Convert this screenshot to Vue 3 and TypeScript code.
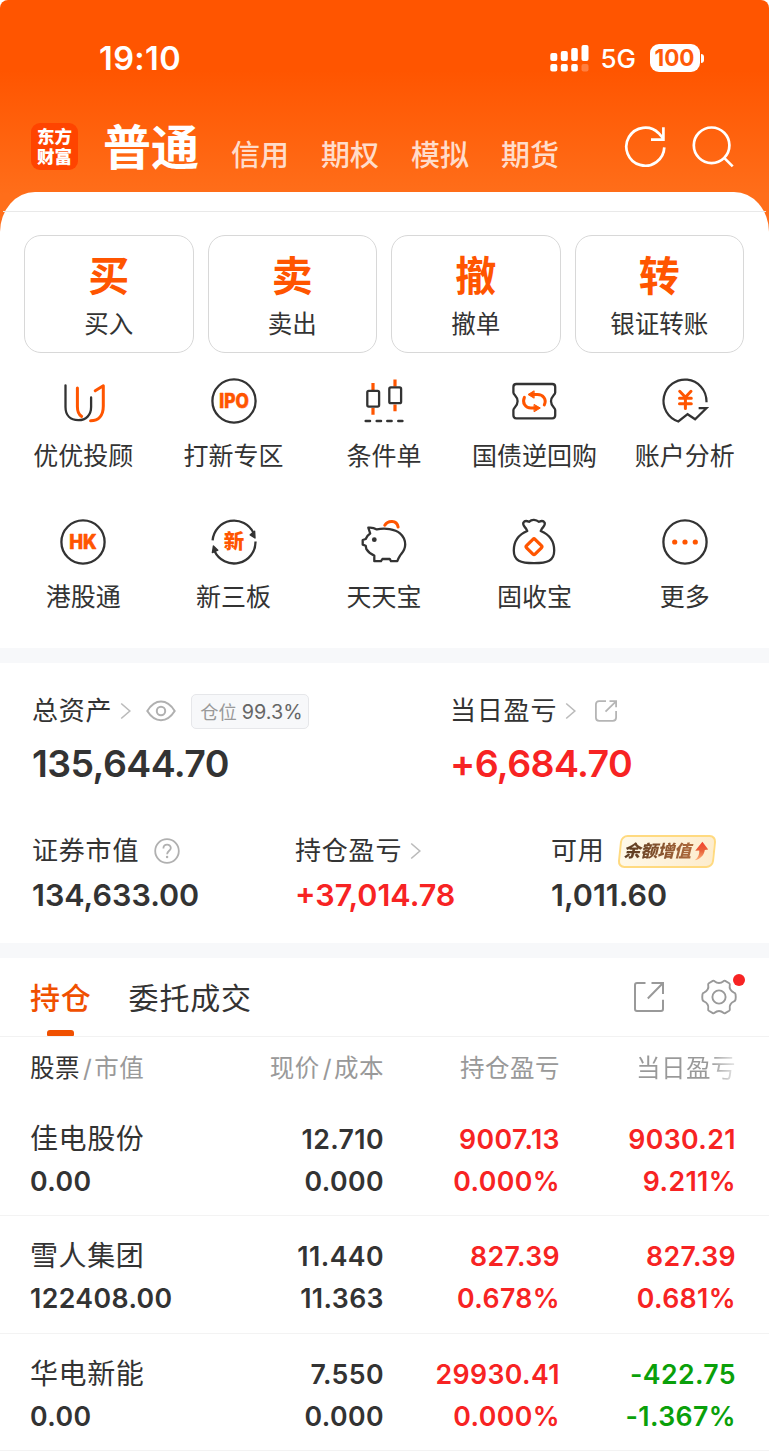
<script setup lang="ts">
interface Tone { text: string; tone: 'dark' | 'up' | 'down' }
interface Holding { name: string; value: string; price: string; cost: string; profit: Tone; profitRate: Tone; day: Tone; dayRate: Tone }

const up = (text: string): Tone => ({ text, tone: 'up' })
const down = (text: string): Tone => ({ text, tone: 'down' })

const modes = ['信用', '期权', '模拟', '期货']

const actions = [
  { glyph: '买', label: '买入' },
  { glyph: '卖', label: '卖出' },
  { glyph: '撤', label: '撤单' },
  { glyph: '转', label: '银证转账' },
]

const services = [
  { icon: 'advisor', label: '优优投顾' },
  { icon: 'ipo', label: '打新专区' },
  { icon: 'candles', label: '条件单' },
  { icon: 'ticket', label: '国债逆回购' },
  { icon: 'analysis', label: '账户分析' },
  { icon: 'hk', label: '港股通' },
  { icon: 'board', label: '新三板' },
  { icon: 'pig', label: '天天宝' },
  { icon: 'bag', label: '固收宝' },
  { icon: 'more', label: '更多' },
]

const holdings: Holding[] = [
  { name: '佳电股份', value: '0.00', price: '12.710', cost: '0.000', profit: up('9007.13'), profitRate: up('0.000%'), day: up('9030.21'), dayRate: up('9.211%') },
  { name: '雪人集团', value: '122408.00', price: '11.440', cost: '11.363', profit: up('827.39'), profitRate: up('0.678%'), day: up('827.39'), dayRate: up('0.681%') },
  { name: '华电新能', value: '0.00', price: '7.550', cost: '0.000', profit: up('29930.41'), profitRate: up('0.000%'), day: down('-422.75'), dayRate: down('-1.367%') },
]
</script>

<template>
  <div class="page">
    <header class="header">
      <div class="status">
        <span class="clock">19:10</span>
        <div class="status-right">
          <svg class="signal" width="39" height="29" viewBox="0 0 39 29" fill="#fff">
            <rect x="0.3" y="9" width="7" height="8" rx="2" />
            <rect x="10.8" y="7" width="7" height="10" rx="2" />
            <rect x="21.2" y="4" width="6.6" height="13" rx="2" />
            <rect x="31.5" y="1" width="7" height="16" rx="2" />
            <rect x="0.3" y="20" width="7" height="7.6" rx="2" />
            <rect x="10.8" y="20" width="7" height="7.6" rx="2" />
            <rect x="21.2" y="20" width="6.6" height="7.6" rx="2" />
            <rect x="31.5" y="20" width="7" height="7.6" rx="2" opacity="0.25" />
          </svg>
          <span class="network">5G</span>
          <span class="battery">100</span>
          <span class="battery-tip"></span>
        </div>
      </div>
      <div class="nav">
        <div class="logo"><span>东方</span><span>财富</span></div>
        <span class="mode-active">普通</span>
        <span v-for="mode in modes" :key="mode" class="mode">{{ mode }}</span>
        <div class="nav-icons">
          <svg width="44" height="44" viewBox="0 0 44 44" fill="none" stroke="#fff" stroke-width="2.7">
            <path d="M41.3 21.4A19 19 0 1 1 35.7 7.2L40 12.2M40.4 1.2V13.7H28" />
          </svg>
          <svg width="44" height="44" viewBox="0 0 44 44" fill="none" stroke="#fff" stroke-width="2.7">
            <circle cx="20.6" cy="19.3" r="17.8" />
            <path d="M33.2 31.9L41.7 40.4" />
          </svg>
        </div>
      </div>
    </header>

    <main class="sheet">
      <div class="sheet-line"></div>
      <section class="actions">
        <div v-for="action in actions" :key="action.label" class="action">
          <span class="action-glyph">{{ action.glyph }}</span>
          <span class="action-label">{{ action.label }}</span>
        </div>
      </section>

      <section class="services">
        <div v-for="service in services" :key="service.label" class="service">
          <svg class="service-icon" width="50" height="50" viewBox="0 0 50 50" fill="none" stroke="#333" stroke-width="2.3" stroke-linecap="round" stroke-linejoin="round">
            <template v-if="service.icon === 'advisor'">
              <path d="M7.5 9.3V31C7.5 39.5 12.5 44.2 20.3 44.2S33.1 39 33.1 31V21.5" />
              <path stroke="#ff5500" stroke-width="3" d="M19.4 12V30.5C19.4 35.5 21.2 39 23.6 40.4M37.2 14.8L45.3 9.8V30C45.3 39.5 40.5 44.8 32.6 44.8" />
            </template>
            <template v-else-if="service.icon === 'ipo'">
              <circle cx="25" cy="25" r="21.6" />
              <text class="badge-text" x="25" y="32" textLength="29.5" lengthAdjust="spacingAndGlyphs" text-anchor="middle">IPO</text>
            </template>
            <template v-else-if="service.icon === 'candles'">
              <path stroke="#ff5500" stroke-width="3.2" stroke-linecap="butt" d="M14 7V14M14 32V38.7M36 3.5V10.5M36 28.5V35.2" />
              <rect x="8.3" y="14.8" width="11.8" height="15.8" rx="1.5" />
              <rect x="30.3" y="11.4" width="11.8" height="15.8" rx="1.5" />
              <path stroke-width="2.5" d="M6.7 45H11M17.7 45H22M28.3 45H32.6M39.3 45H43.4" />
            </template>
            <template v-else-if="service.icon === 'ticket'">
              <path d="M7.3 8H43.3Q46.2 8 46.2 11V16.5C46.2 19 42 20.2 42 25.2S46.2 31.5 46.2 34V39.3Q46.2 42.3 43.3 42.3H7.3Q4.4 42.3 4.4 39.3V34C4.4 31.5 8.6 30.2 8.6 25.2S4.4 19 4.4 16.5V11Q4.4 8 7.3 8Z" />
              <g stroke="#ff5500" stroke-width="3">
                <path d="M15.4 21.3C12.8 27 16.5 32 22 32H27M35.3 28.9C38 23 34 18.6 28.5 18.6H24" />
                <path fill="#ff5500" stroke-width="1" d="M25.4 28.6L31.3 32L25.4 35.6ZM24.8 15L19 18.5L24.8 22Z" />
              </g>
            </template>
            <template v-else-if="service.icon === 'analysis'">
              <path stroke-linecap="square" stroke-linejoin="miter" d="M46.5 25A21.5 21.5 0 1 0 18.3 45.5L27.6 38.2L35.1 43.2L46.4 32.2H39.8" />
              <path stroke="#ff5500" stroke-width="3" d="M19.7 15.3L25.4 21.3L31 15.3M25.4 22V32.5M19.5 22.2H31.3M19.5 27.8H31.3" />
            </template>
            <template v-else-if="service.icon === 'hk'">
              <circle cx="25" cy="25" r="21.6" />
              <text class="badge-text" x="25" y="32" textLength="27.5" lengthAdjust="spacingAndGlyphs" text-anchor="middle">HK</text>
            </template>
            <template v-else-if="service.icon === 'board'">
              <path stroke-linecap="butt" d="M3.6 23.4A21.5 21.5 0 0 1 44.5 16M46.5 24.6A21.5 21.5 0 0 1 5.5 34" />
              <path fill="#333" stroke-width="1.4" d="M41.2 17.8L45.6 14.2L46 21ZM4.4 29L3.4 35.6L8.8 33.2Z" />
              <text class="board-text" x="25" y="32.4" text-anchor="middle">新</text>
            </template>
            <template v-else-if="service.icon === 'pig'">
              <path d="M9.3 10.7Q14 10.2 17.8 12.4C26 10.6 36 12 41 16.3C44.5 19.3 46.2 23.5 46.2 27.5C46.2 33 43.5 35.5 41.2 38.4Q39.5 41 38.3 44.2H32L30.8 42H23.4L22 44.2H15.3V38.6C11.5 37 8.8 34.5 7.4 32.2L6.7 28.8L3.7 27.6V23L6.7 22C7.8 19.4 9 17.8 11.2 16.5Z" />
              <circle cx="15.3" cy="22.7" r="2.4" fill="#333" stroke="none" />
              <path stroke="#ff5500" stroke-width="3" d="M25.8 8.3C28.8 3.2 37.8 2.7 39.1 10" />
            </template>
            <template v-else-if="service.icon === 'bag'">
              <path d="M18.3 14C17 9.8 13 9.2 14.4 5.5Q16 3 20 4.8Q22.3 2.6 25 2.8T30 4.8Q34 3 35.6 5.5C37 9.2 33 9.8 31.7 14C39 17 45.2 23.5 45.2 33.5C45.2 44 38.5 46.2 25 46.2S4.8 44 4.8 33.5C4.8 23.5 11 17 18.3 14Z" />
              <rect x="19" y="23.7" width="12" height="12" rx="1.5" transform="rotate(45 25 29.7)" stroke="#ff5500" stroke-width="3.2" />
            </template>
            <template v-else>
              <circle cx="25" cy="25" r="21.6" />
              <g fill="#ff5500" stroke="none">
                <circle cx="14.7" cy="25" r="2.6" /><circle cx="25" cy="25" r="2.6" /><circle cx="35.3" cy="25" r="2.6" />
              </g>
            </template>
          </svg>
          <span class="service-label">{{ service.label }}</span>
        </div>
      </section>

      <div class="band"></div>

      <section class="assets">
        <div class="asset total">
          <div class="asset-head">
            <span>总资产</span>
            <svg class="chev" width="12" height="18" viewBox="0 0 12 18"><path d="M1.2 1.5L9.8 9L1.2 16.5" /></svg>
            <svg class="eye" width="30" height="22" viewBox="0 0 30 22" fill="none" stroke="#b0b0b0" stroke-width="2">
              <path d="M1.3 11C5.5 4.3 10 1.6 15 1.6S24.5 4.3 28.7 11C24.5 17.7 20 20.2 15 20.2S5.5 17.7 1.3 11Z" />
              <circle cx="15" cy="11" r="4.2" />
            </svg>
            <span class="position">仓位 <b>99.3%</b></span>
          </div>
          <div class="amount big">135,644.70</div>
        </div>
        <div class="asset today">
          <div class="asset-head">
            <span>当日盈亏</span>
            <svg class="chev" width="12" height="18" viewBox="0 0 12 18"><path d="M1.2 1.5L9.8 9L1.2 16.5" /></svg>
            <svg class="share" width="24" height="24" viewBox="0 0 24 24" fill="none" stroke="#b5b5b5" stroke-width="1.8">
              <path d="M12 2.2H5.2Q1.9 2.2 1.9 5.5V18.5Q1.9 21.8 5.2 21.8H18.8Q22.1 21.8 22.1 18.5V12M15.5 2.2H22.1V8.2M22 2.3L11.5 12.6" />
            </svg>
          </div>
          <div class="amount big up">+6,684.70</div>
        </div>
      </section>
      <section class="assets second">
        <div class="asset market">
          <div class="asset-head">
            <span>证券市值</span>
            <svg class="help" width="26" height="26" viewBox="0 0 26 26" fill="none" stroke="#b0b0b0" stroke-width="1.8">
              <circle cx="13" cy="13" r="11.8" />
              <path d="M9.4 10.4C9.4 5.3 16.8 5.6 16.8 10C16.8 12.7 13.1 12.8 13.1 16.2" />
              <circle cx="13.1" cy="19" r="1.2" fill="#b0b0b0" stroke="none" />
            </svg>
          </div>
          <div class="amount">134,633.00</div>
        </div>
        <div class="asset profit">
          <div class="asset-head">
            <span>持仓盈亏</span>
            <svg class="chev" width="12" height="18" viewBox="0 0 12 18"><path d="M1.2 1.5L9.8 9L1.2 16.5" /></svg>
          </div>
          <div class="amount up">+37,014.78</div>
        </div>
        <div class="asset cash">
          <div class="asset-head">
            <span>可用</span>
            <span class="promo">
              <em>余额增值</em>
              <svg width="15" height="20" viewBox="0 0 15 20">
                <defs><linearGradient id="promo-arrow" x1="0" y1="0" x2="0" y2="1"><stop offset="0" stop-color="#f5402c" /><stop offset="0.5" stop-color="#e8633a" /><stop offset="1" stop-color="#ffb27a" /></linearGradient></defs>
                <path fill="url(#promo-arrow)" d="M8.4 0.8L14.2 8.6L10.8 8.9C10.2 14 6.5 18 0.8 19.2C4.2 16.5 5.6 13 5.3 9.4L1.2 9.7Z" />
              </svg>
            </span>
          </div>
          <div class="amount">1,011.60</div>
        </div>
      </section>

      <div class="band"></div>

      <section class="tabs">
        <span class="tab active">持仓</span>
        <span class="tab">委托成交</span>
        <div class="tab-icons">
          <svg width="32" height="32" viewBox="0 0 32 32" fill="none" stroke="#999" stroke-width="2">
            <path d="M12.5 2H4Q2 2 2 4V28Q2 30 4 30H28Q30 30 30 28V18.7M18.5 2H30V13M30 2L14.8 17.5" />
          </svg>
          <div class="gear">
            <svg width="40" height="40" viewBox="0 0 40 40" fill="none" stroke="#999" stroke-width="1.9" stroke-linejoin="round">
              <path d="M13.8 3.9Q14.8 3.4 15.6 4.2Q17.6 6 20 6T24.4 4.2Q25.2 3.4 26.2 3.9L30.2 6.2Q31.1 6.8 30.8 8Q30.2 10.6 31.4 12.6T35 15.6Q36.2 16 36.5 17.2Q37 20 36.5 22.8Q36.2 24 35 24.4Q32.6 25.4 31.4 27.4T30.8 32Q31.1 33.2 30.2 33.8L26.2 36.1Q25.2 36.6 24.4 35.8Q22.4 34 20 34T15.6 35.8Q14.8 36.6 13.8 36.1L9.8 33.8Q8.9 33.2 9.2 32Q9.8 29.4 8.6 27.4T5 24.4Q3.8 24 3.5 22.8Q3 20 3.5 17.2Q3.8 16 5 15.6Q7.4 14.6 8.6 12.6T9.2 8Q8.9 6.8 9.8 6.2Z" />
              <circle cx="20" cy="20" r="6.6" />
            </svg>
            <i class="dot"></i>
          </div>
        </div>
      </section>

      <section class="table">
        <div class="row head">
          <span class="left"><b>股票</b><i>/</i>市值</span>
          <span>现价<i>/</i>成本</span>
          <span>持仓盈亏</span>
          <span class="fade">当日盈亏</span>
        </div>
        <div v-for="h in holdings" :key="h.name" class="row item">
          <div class="cell left"><span class="name">{{ h.name }}</span><span class="num">{{ h.value }}</span></div>
          <div class="cell"><span class="num">{{ h.price }}</span><span class="num">{{ h.cost }}</span></div>
          <div class="cell"><span class="num" :class="h.profit.tone">{{ h.profit.text }}</span><span class="num" :class="h.profitRate.tone">{{ h.profitRate.text }}</span></div>
          <div class="cell"><span class="num" :class="h.day.tone">{{ h.day.text }}</span><span class="num" :class="h.dayRate.tone">{{ h.dayRate.text }}</span></div>
        </div>
      </section>
    </main>
  </div>
</template>

<style>
body { margin: 0; background: #fff; }
</style>

<style scoped>
* { box-sizing: border-box; }
.page { width: 769px; height: 1453px; overflow: hidden; background: #fff; color: #333; font-family: Inter, "Noto Sans CJK SC", sans-serif; white-space: nowrap; }
svg { display: block; flex: none; }

.header { height: 236px; border-radius: 8px 8px 0 0; background: linear-gradient(#ff5500 0, #ff5500 70px, #ff6e1a 195px, #ff6e1a 100%); color: #fff; }
.status { height: 116px; padding: 0 64px 0 99px; display: flex; align-items: center; justify-content: space-between; }
.clock { font-size: 32.5px; letter-spacing: 0.4px; font-weight: 600; line-height: 40px; padding-top: 1px; }
.status-right { display: flex; align-items: center; }
.network { margin-left: 12px; width: 49px; font-size: 26px; font-weight: 500; line-height: 30px; padding-top: 2px; }
.battery { width: 50px; height: 28px; border-radius: 9px; background: #fff; color: #ff5a08; font-size: 22.5px; font-weight: 700; line-height: 28px; text-align: center; }
.battery-tip { width: 3px; height: 9px; margin-left: 1.5px; margin-right: 1px; background: #fff; border-radius: 0 4px 4px 0; }
.nav { height: 60px; padding-left: 31px; display: flex; align-items: center; }
.logo { width: 47px; height: 47px; margin-top: 1px; border-radius: 9px; background: #ff4400; display: flex; flex-direction: column; justify-content: center; align-items: center; font-size: 17.5px; font-weight: 900; line-height: 19.5px; }
.mode-active { margin-left: 25px; margin-top: 3px; font-size: 48px; font-weight: 700; line-height: 60px; }
.mode { margin-left: 32px; margin-top: 19px; font-size: 29px; font-weight: 500; line-height: 40px; color: #ffdcca; }
.nav-icons { margin-left: auto; margin-right: 34px; display: flex; gap: 24px; margin-top: 3px; }

.sheet { position: relative; margin-top: -44px; background: #fff; border-radius: 35px 35px 0 0 / 40px 40px 0 0; }
.sheet-line { height: 20px; border-bottom: 1px solid #e9e9e9; margin-left: 3px; margin-right: 3px; }
.actions { padding: 23px 25px 0 24px; display: flex; gap: 14px; }
.action { flex: 1; height: 118px; border: 1.5px solid #d8d8d8; border-radius: 17px; display: flex; flex-direction: column; align-items: center; }
.action-glyph { margin-top: 14px; font-size: 41px; font-weight: 700; line-height: 52px; color: #ff5500; }
.action-label { margin-top: 5px; font-size: 24.5px; line-height: 34px; }
.services { height: 295px; padding: 23px 9px 0 8px; display: grid; grid-template-columns: repeat(5, 1fr); grid-template-rows: 141px 131px; }
.service { display: flex; flex-direction: column; align-items: center; }
.service-label { margin-top: 13px; font-size: 25px; line-height: 34px; }
.badge-text { font-family: Inter, sans-serif; font-size: 19.5px; font-weight: 800; fill: #ff5500; stroke: #ff5500; stroke-width: 0.6px; }
.board-text { font-family: "Noto Sans CJK SC", sans-serif; font-size: 20.5px; font-weight: 900; fill: #ff5500; stroke: none; }
.band { height: 15px; background: #f7f8fa; }

.assets { height: 140px; padding: 30px 0 0 32px; display: flex; }
.asset-head { height: 36px; display: flex; align-items: center; font-size: 26px; letter-spacing: 0.8px; line-height: 36px; }
.chev { margin-left: 7.5px; fill: none; stroke: #bbb; stroke-width: 1.6; }
.total { width: 418px; }
.eye { margin-left: 14px; }
.position { margin-left: 15.5px; width: 118px; height: 35px; padding-left: 2px; border: 1.5px solid #e6e7ea; border-radius: 5px; background: #f7f8fa; color: #999; font-size: 18.3px; letter-spacing: 0; line-height: 34px; text-align: center; }
.position b { font-weight: 400; font-size: 19.8px; color: #666; }
.share { margin-left: 17px; }
.amount { margin-top: 10px; font-size: 30.5px; font-weight: 600; line-height: 32px; }
.amount.big { margin-top: 12px; font-size: 37.5px; letter-spacing: -0.6px; line-height: 46px; }
.up { color: #f72323; }
.down { color: #0aa00a; }
.second { padding-top: 30px; }
.market { width: 263px; }
.profit { width: 256px; }
.help { margin-left: 15px; }
.promo { position: relative; margin-left: 14px; width: 96px; height: 33px; padding-left: 5px; display: flex; align-items: center; }
.promo::before { content: ""; position: absolute; inset: 0; border: 2px solid #ffda80; border-radius: 7px; background: linear-gradient(100deg, #fff9e9, #fdeccd); transform: skewX(-6deg); }
.promo em { position: relative; font-size: 17px; letter-spacing: -0.2px; font-weight: 800; line-height: 32px; background: linear-gradient(90deg, #593a20, #b06a3c); background-clip: text; -webkit-background-clip: text; color: transparent; font-style: italic; padding-right: 3px; }
.promo svg { position: relative; }

.tabs { height: 79px; padding-left: 30px; display: flex; border-bottom: 1.5px solid #f2f2f2; align-items: stretch; }
.tab { position: relative; margin-right: 37px; font-size: 30px; letter-spacing: 0.8px; line-height: 80px; }
.tab.active { color: #f05000; font-weight: 500; }
.tab.active::after { content: ""; position: absolute; left: 17px; bottom: 0; width: 27px; height: 6px; border-radius: 3px 3px 1px 1px; background: #f05000; }
.tab-icons { margin-left: auto; margin-right: 30px; display: flex; align-items: center; gap: 34px; }
.gear { position: relative; }
.dot { position: absolute; right: -6px; top: -3px; width: 12px; height: 12px; border-radius: 50%; background: #f72323; }

.row { padding: 0 33px 0 30px; display: grid; grid-template-columns: 178px 176px 176px 176px; text-align: right; }
.head { height: 62px; font-size: 24.5px; letter-spacing: 0.5px; line-height: 62px; color: #999; }
.head b { font-weight: 400; color: #333; }
.head i { font-style: normal; margin: 0 2px 0 3px; }
.row .left { text-align: left; }
.fade { background: linear-gradient(90deg, #999 85%, #e8e8e8 100%); background-clip: text; -webkit-background-clip: text; color: transparent; }
.item { height: 117.3px; padding-top: 19px; border-bottom: 1.5px solid #f3f3f3; }
.cell { display: flex; flex-direction: column; }
.name, .num { line-height: 42px; }
.name { font-size: 28px; letter-spacing: 0.6px; }
.num { font-size: 26.7px; letter-spacing: 0.4px; font-weight: 600; }
</style>
